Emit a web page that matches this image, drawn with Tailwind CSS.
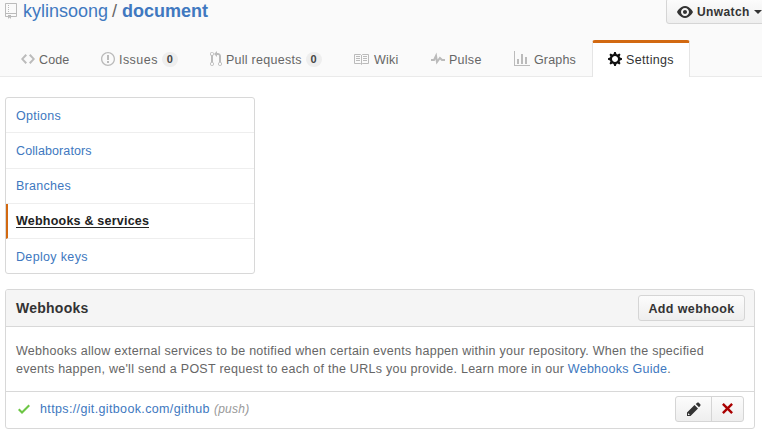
<!DOCTYPE html>
<html lang="en">
<head>
<meta charset="utf-8">
<title>Webhooks &amp; services</title>
<script src="https://cdn.jsdelivr.net/npm/@tailwindcss/browser@4"></script>
</head>
<body class="h-[442px] w-[762px] overflow-hidden bg-white font-['Liberation_Sans',Arial,sans-serif] text-[12.5px] leading-[18px] tracking-[0.265px] text-[#666]">
<header class="flex h-[77px] flex-col justify-between border-b border-[#eaeaea] bg-[#fafafa]">
  <div class="flex h-[24px] items-start justify-between">
    <h1 class="flex h-[22px] items-center pl-[5px] text-[18px] leading-[22px] tracking-normal whitespace-nowrap">
      <svg class="mr-[6px] h-[16px] w-[12px] shrink-0" viewBox="0 0 12 16" fill="#bbb"><path d="M4 9H3V8h1zm0-3H3v1h1zm0-2H3v1h1zm0-2H3v1h1zm8-1v12c0 .55-.45 1-1 1H6v2l-1.5-1.5L3 16v-2H1c-.55 0-1-.45-1-1V1c0-.55.45-1 1-1h10c.55 0 1 .45 1 1zm-1 10H1v2h2v-1h3v1h5zm0-10H1v9h10z"/></svg>
      <a class="text-[#4078c0]">kylinsoong</a><span class="mr-[5px] ml-[4px]">/</span><a class="font-bold text-[#4078c0]">document</a>
    </h1>
    <button class="-mt-[2px] -mr-[4px] flex h-[26px] w-[100px] items-center rounded-[3px] border border-[#d5d5d5] bg-linear-to-b from-[#fcfcfc] to-[#eee] pt-[1px] pl-[10px] text-[12px] font-bold tracking-[0.4px] text-[#333]">
      <svg class="mr-[4px] h-[12px] w-[16px] shrink-0" viewBox="0 0 16 12" fill="#333"><path fill-rule="evenodd" d="M8.06 0C3 0 0 6 0 6s3 6 8.06 6C13 12 16 6 16 6s-3-6-7.94-6zM8 10C5.8 10 4 8.22 4 6c0-2.2 1.8-4 4-4 2.22 0 4 1.8 4 4 0 2.22-1.78 4-4 4zm2-4c0 1.11-.89 2-2 2s-2-.89-2-2 .89-2 2-2 2 .89 2 2z"/></svg>
      <span>Unwatch</span>
      <svg class="ml-[4px] h-[4px] w-[8px] shrink-0" viewBox="0 0 8 4" fill="#333"><path d="M0 0h8L4 4z"/></svg>
    </button>
  </div>
  <nav class="-mb-px flex h-[37px] items-stretch whitespace-nowrap">
    <a class="ml-[21px] flex w-[80px] items-center tracking-[0.1px]"><svg class="mr-[4px] h-[16px] w-[14px]" viewBox="0 0 14 16" fill="#bbb"><path d="M9.5 3L8 4.5 11.5 8 8 11.500 9.5 13 14 8zm-5 0L0 8l4.500 5L6 11.500 2.500 8 6 4.500z"/></svg><span class="mt-[2px]">Code</span></a>
    <a class="flex w-[109px] items-center tracking-[0.45px]"><svg class="mr-[4px] h-[16px] w-[14px]" viewBox="0 0 14 16" fill="#bbb"><path d="M7 2.300c3.140 0 5.700 2.560 5.700 5.700s-2.560 5.700-5.700 5.700A5.710 5.710 0 0 1 1.300 8c0-3.140 2.560-5.700 5.700-5.700zM7 1C3.140 1 0 4.140 0 8s3.140 7 7 7 7-3.140 7-7-3.140-7-7-7zm1 3H6v5h2zm0 6H6v2h2z"/></svg><span class="mt-[2px]">Issues</span><span class="mt-[2px] ml-[4px] h-[15px] w-[16px] rounded-full bg-[#eee] text-center text-[11px] leading-[15px] font-bold tracking-normal text-[#444]">0</span></a>
    <a class="flex w-[144px] items-center tracking-[0.26px]"><svg class="mr-[4px] h-[16px] w-[12px]" viewBox="0 0 12 16" fill="#bbb"><path d="M11 11.280V5c-.030-.780-.340-1.470-.940-2.060C9.460 2.350 8.780 2.030 8 2H7V0L4 3l3 3V4h1c.270.020.480.110.690.310.210.200.300.420.310.690v6.280A1.993 1.993 0 0 0 10 15a1.993 1.993 0 0 0 1-3.720zm-1 2.920c-.660 0-1.200-.550-1.200-1.200 0-.650.550-1.200 1.200-1.200.650 0 1.200.550 1.200 1.200 0 .650-.550 1.200-1.200 1.200zM4 3c0-1.110-.890-2-2-2a1.993 1.993 0 0 0-1 3.720v6.560A1.993 1.993 0 0 0 2 15a1.993 1.993 0 0 0 1-3.720V4.720c.590-.340 1-.980 1-1.720zm-.800 10c0 .660-.550 1.200-1.200 1.200-.650 0-1.200-.550-1.200-1.200 0-.650.550-1.200 1.200-1.200.650 0 1.200.550 1.200 1.200zM2 4.200C1.340 4.200.8 3.650.8 3c0-.650.550-1.200 1.200-1.200.650 0 1.200.550 1.200 1.200 0 .650-.550 1.200-1.200 1.200z"/></svg><span class="mt-[2px]">Pull requests</span><span class="mt-[2px] ml-[4px] h-[15px] w-[16px] rounded-full bg-[#eee] text-center text-[11px] leading-[15px] font-bold tracking-normal text-[#444]">0</span></a>
    <a class="flex w-[77px] items-center"><svg class="mr-[5px] h-[16px] w-[15px]" viewBox="0 0 15 16" fill="none" stroke="#bbb"><path d="M.5 3.500H6.500L7.500 4.500 8.500 3.500h6v9h-6l-1 1-1-1H.5zM7.500 4v9M2 5.500h4M2 7.500h4M2 9.500h4M9 5.500h4M9 7.500h4M9 9.500h4"/></svg><span class="mt-[2px]">Wiki</span></a>
    <a class="flex w-[83px] items-center"><svg class="mr-[4px] h-[16px] w-[14px]" viewBox="0 0 14 16" fill="#bbb"><path d="M11.500 8L8.800 5.400 6.600 8.500 5.500 1.600 2.380 8H0v2h3.600l.9-1.800.9 5.400L9 8.500l1.600 1.500H14V8z"/></svg><span class="mt-[2px]">Pulse</span></a>
    <a class="flex w-[78px] items-center tracking-[0.15px]"><svg class="mr-[4px] h-[16px] w-[16px]" viewBox="0 0 16 16" fill="#bbb"><path d="M16 14v1H0V0h1v14zM5 13H3V8h2zm4 0H7V3h2zm4 0h-2V6h2z"/></svg><span class="mt-[2px]">Graphs</span></a>
    <a class="flex w-[98px] items-center rounded-t-[3px] border-x border-t-[3px] border-x-[#e5e5e5] border-t-[#d26911] bg-white pb-[1px] pl-[15px] tracking-[0.35px] text-[#333]"><svg class="-mt-[1px] mr-[4px] h-[16px] w-[14px]" viewBox="0 0 14 16" fill="#111"><path fill-rule="evenodd" d="M14 8.770v-1.600l-1.940-.640-.450-1.090.880-1.840-1.130-1.130-1.810.910-1.090-.450-.690-1.920h-1.600l-.630 1.940-1.110.450-1.840-.880-1.130 1.130.910 1.810-.450 1.090L0 7.230v1.590l1.940.640.450 1.090-.880 1.840 1.130 1.130 1.810-.910 1.090.450.690 1.920h1.590l.630-1.940 1.110-.450 1.840.880 1.130-1.130-.920-1.810.470-1.090zM7 11c-1.660 0-3-1.340-3-3s1.340-3 3-3 3 1.340 3 3-1.340 3-3 3z"/></svg><span>Settings</span></a>
  </nav>
</header>
<main class="pt-[20px] pl-[5px]">
  <nav class="flex h-[177px] w-[250px] flex-col rounded-[3px] border border-[#d8d8d8] text-[#4078c0]">
    <a class="h-[35px] border-b border-[#eee] pt-[9px] pl-[10px]">Options</a>
    <a class="h-[36px] border-b border-[#eee] pt-[9px] pl-[10px] tracking-[0.1px]">Collaborators</a>
    <a class="h-[35px] border-b border-[#eee] pt-[8px] pl-[10px]">Branches</a>
    <a class="h-[35px] border-b border-l-2 border-b-[#eee] border-l-[#d26911] pt-[8px] pl-[8px] font-bold text-[#222]"><span class="inline-block h-[16px] border-b border-[#222] text-[12.5px] leading-[18px] tracking-[0.22px]">Webhooks &amp; services</span></a>
    <a class="pt-[9px] pl-[10px] tracking-[0.34px]">Deploy keys</a>
  </nav>
  <section class="mt-[15px] h-[140px] w-[750px] rounded-[3px] border border-[#d8d8d8]">
    <div class="flex h-[37px] items-center justify-between rounded-t-[2px] border-b border-[#d8d8d8] bg-[#f5f5f5] pr-[9px] pl-[10px]">
      <h2 class="-mt-[1px] text-[14px] font-bold tracking-[0.25px] text-[#333]">Webhooks</h2>
      <button class="h-[26px] w-[107px] rounded-[3px] border border-[#d5d5d5] bg-linear-to-b from-[#fcfcfc] to-[#eee] pt-[1px] text-[12.5px] font-bold tracking-[0.38px] text-[#333]">Add webhook</button>
    </div>
    <p class="h-[65px] border-b border-[#d8d8d8] pt-[15px] pl-[10px] whitespace-nowrap"><span>Webhooks allow external services to be notified when certain events happen within your repository. When the specified</span><br><span>events happen, we'll send a POST request to each of the URLs you provide. Learn more in our <a class="text-[#4078c0]">Webhooks Guide</a>.</span></p>
    <div class="flex h-[34px] items-center pr-[10px] pl-[12px]">
      <svg class="mr-[10px] h-[16px] w-[12px]" viewBox="0 0 12 16" fill="#6cc644"><path d="M12 5l-8 8-4-4 1.500-1.500L4 10l6.500-6.500z"/></svg>
      <a class="tracking-[0.36px] text-[#4078c0]">https://git.gitbook.com/github</a><em class="ml-[4px] text-[12px] text-[#999]">(push)</em>
      <div class="ml-auto flex h-[26px] w-[69px] rounded-[3px] border border-[#d5d5d5] bg-linear-to-b from-[#fcfcfc] to-[#eee]">
        <span class="flex w-[36px] items-center justify-center border-r border-[#d5d5d5]"><svg class="h-[16px] w-[14px]" viewBox="0 0 14 16" fill="#333"><path fill-rule="evenodd" d="M0 11.500V15h3.500l7.500-7.500L7.500 4zm2.600 2.500H1v-1.600h.9v.8h.7zM13.300 4.700L12 6.300 8.700 3l1.600-1.300a.996.996 0 0 1 1.410 0l1.590 1.590c.390.390.390 1.020 0 1.410z"/></svg></span>
        <span class="flex flex-1 items-center justify-center"><svg class="-mt-[1px] h-[11px] w-[11px]" viewBox="0 0 10 10" stroke="#a00" stroke-width="2.200"><path d="M.8.8l8.400 8.400M9.200.8L.8 9.200"/></svg></span>
      </div>
    </div>
  </section>
</main>
</body>
</html>
